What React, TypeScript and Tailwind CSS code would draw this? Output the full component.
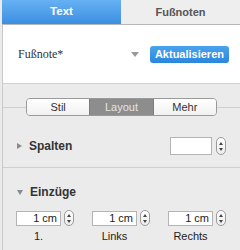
import React from "react";

function Stepper({ h }: { h: string }) {
  return (
    <div
      className={`flex w-[10px] ${h} flex-col items-center justify-center gap-[3px] rounded-full border border-[#9c9c9c] bg-gradient-to-b from-white to-[#ececec]`}
    >
      <span className="h-0 w-0 border-x-[2.5px] border-b-[3px] border-x-transparent border-b-[#444]" />
      <span className="h-0 w-0 border-x-[2.5px] border-t-[3px] border-x-transparent border-t-[#444]" />
    </div>
  );
}

function Feld({ wert, label }: { wert: string; label: string }) {
  return (
    <div className="flex flex-col items-start">
      <div className="flex items-center gap-[3px]">
        <div className="flex h-[15px] w-[45px] items-center justify-end border border-[#b4b4b4] bg-white pr-[3px] text-[11px] text-[#222]">
          {wert}
        </div>
        <Stepper h="h-[16px]" />
      </div>
      <span className="mt-[2px] w-[45px] text-center text-[11px] text-[#222]">{label}</span>
    </div>
  );
}

export default function App() {
  return (
    <div className="flex h-[250px] w-[240px] flex-col overflow-hidden bg-[#ebebeb] pl-[2px] font-['Liberation_Sans',Arial,sans-serif]">
      <div className="flex h-[25px] border-b border-[#b8b8b8]">
        <div className="flex w-[119px] items-center justify-center bg-gradient-to-b from-[#66b1f3] to-[#3b8fe2] text-[11.5px] font-bold text-white">
          Text
        </div>
        <div className="flex flex-1 items-center justify-center bg-[#eeeeee] text-[11px] font-bold text-[#555]">
          Fußnoten
        </div>
      </div>

      <div className="flex flex-1 flex-col border-l border-[#c9c9c9]">
        <div className="flex h-[59px] items-center border-b border-[#d2d2d2] bg-white pl-[15px]">
          <span className="flex-1 font-['Liberation_Serif',serif] text-[12px] text-[#333]">Fußnote*</span>
          <span className="mr-[11px] h-0 w-0 border-x-[4px] border-t-[5px] border-x-transparent border-t-[#9a9a9a]" />
          <button className="mr-[11px] h-[17px] rounded-[3px] bg-gradient-to-b from-[#4aa3ee] to-[#2a86dd] px-[5px] text-[11px] font-bold text-white">
            Aktualisieren
          </button>
        </div>

        <div className="mt-[14px] flex items-center">
          <div className="h-px flex-1 bg-[#cfcfcf]" />
          <div className="flex h-[18px] w-[191px] overflow-hidden rounded-[4px] border border-[#9a9a9a] text-[11px]">
            <div className="flex flex-1 items-center justify-center bg-gradient-to-b from-white to-[#f1f1f1] text-[#333]">
              Stil
            </div>
            <div className="flex flex-1 items-center justify-center border-x border-[#7d7d7d] bg-[#8d8d8d] text-[#e4e4e4]">
              Layout
            </div>
            <div className="flex flex-1 items-center justify-center bg-gradient-to-b from-white to-[#f1f1f1] text-[#333]">
              Mehr
            </div>
          </div>
          <div className="h-px flex-1 bg-[#cfcfcf]" />
        </div>

        <div className="mt-[21px] flex items-center pl-[14px] pr-[14px]">
          <span className="h-0 w-0 border-y-[3.5px] border-l-[5px] border-y-transparent border-l-[#8a8a8a]" />
          <span className="ml-[7px] flex-1 text-[12px] font-bold text-[#333]">Spalten</span>
          <div className="h-[18px] w-[42px] border border-[#b4b4b4] bg-white" />
          <div className="ml-[4px]">
            <Stepper h="h-[18px]" />
          </div>
        </div>

        <div className="mt-[12px] h-px bg-[#cfcfcf]" />

        <div className="mt-[15px] flex items-center pl-[14px]">
          <span className="h-0 w-0 border-x-[3.5px] border-t-[5px] border-x-transparent border-t-[#8a8a8a]" />
          <span className="ml-[7px] text-[12px] font-bold text-[#333]">Einzüge</span>
        </div>

        <div className="mt-[9px] flex gap-[18px] pl-[13px]">
          <Feld wert="1 cm" label="1." />
          <Feld wert="1 cm" label="Links" />
          <Feld wert="1 cm" label="Rechts" />
        </div>
      </div>
    </div>
  );
}
